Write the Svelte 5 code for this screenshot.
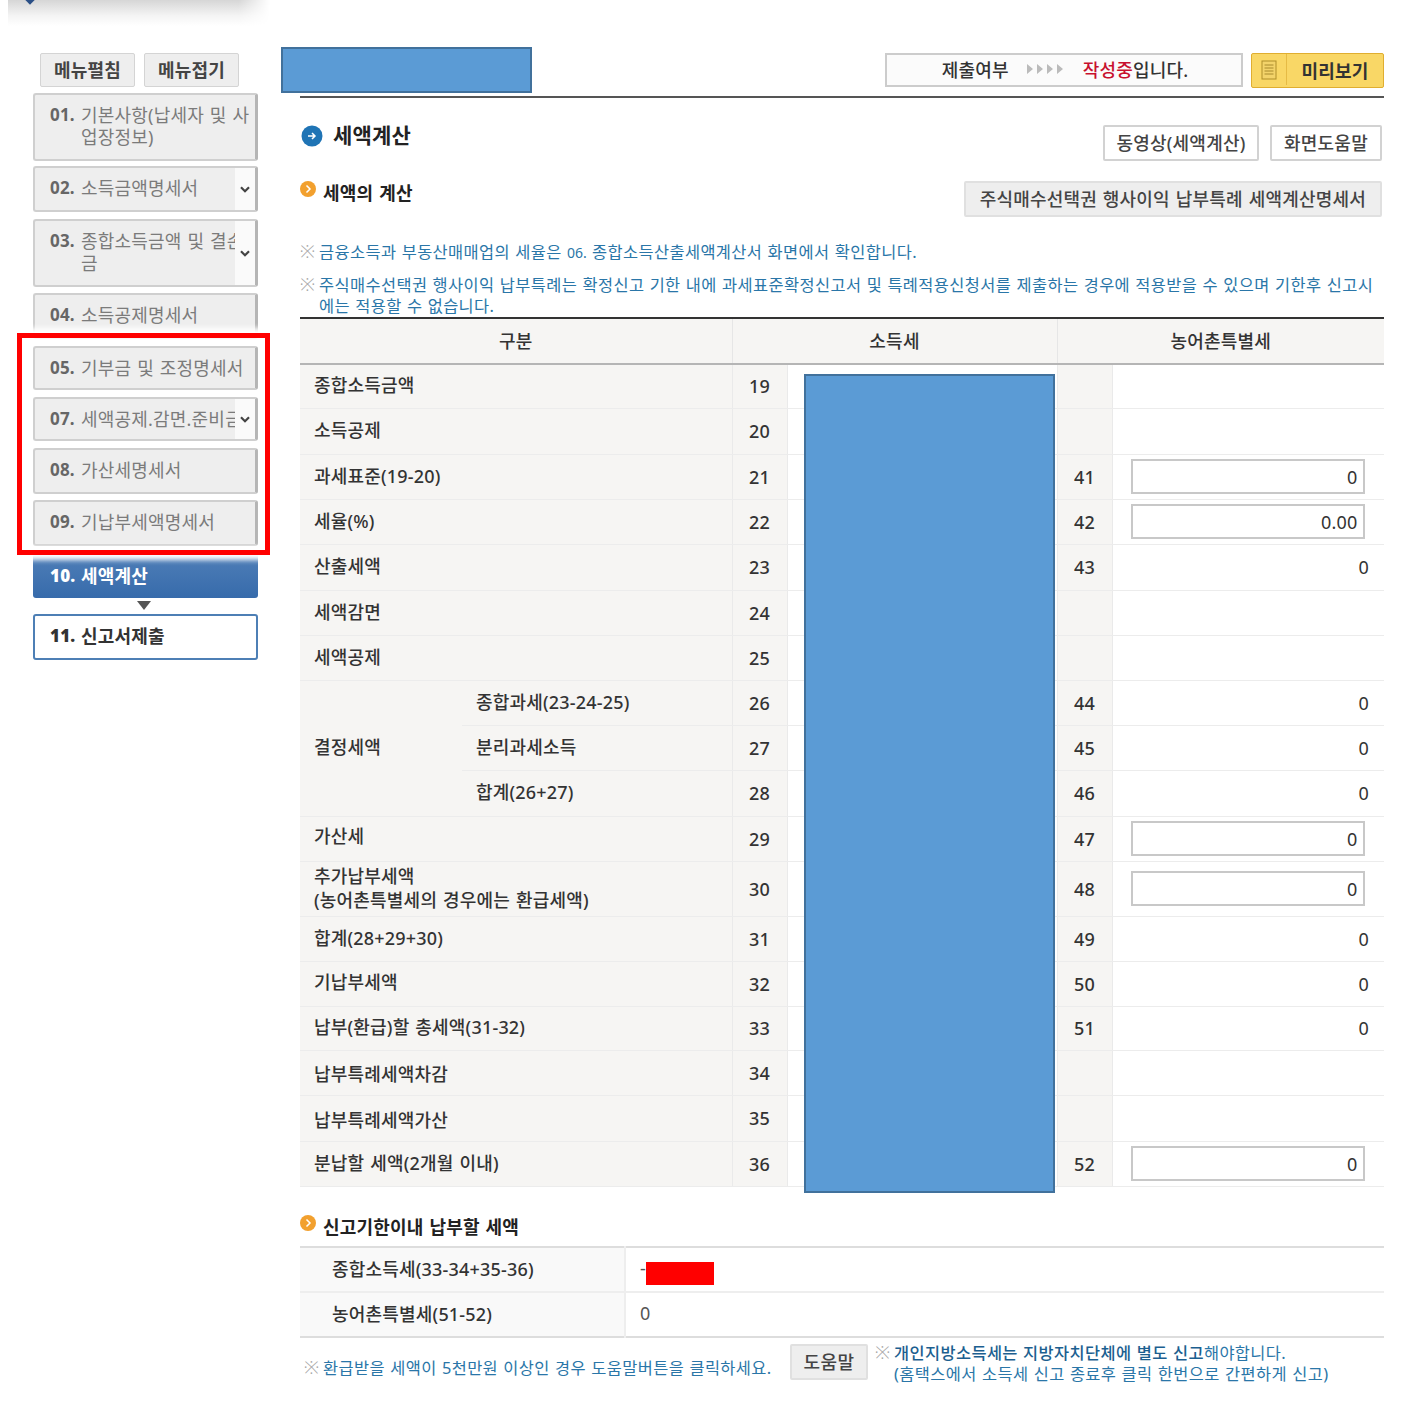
<script>
  const menu = [
    { num: "01.", label: "기본사항(납세자 및 사업장정보)", h: 68, mb: 5 },
    { num: "02.", label: "소득금액명세서", h: 46, mb: 7, arrow: true },
    { num: "03.", label: "종합소득금액 및 결손금", h: 68, mb: 6, arrow: true },
    { num: "04.", label: "소득공제명세서", h: 46, mb: 7 },
    { num: "05.", label: "기부금 및 조정명세서", h: 44, mb: 7 },
    { num: "07.", label: "세액공제.감면.준비금명세서", h: 44, mb: 7, arrow: true, nowrap: true },
    { num: "08.", label: "가산세명세서", h: 46, mb: 6 },
    { num: "09.", label: "기납부세액명세서", h: 46, mb: 6 },
  ];

  // pt / pb: the source's labels sit a little off-centre in a few rows
  const rows = [
    { label: "종합소득금액", no: 19, h: 44 },
    { label: "소득공제", no: 20, h: 46 },
    { label: "과세표준(19-20)", no: 21, no2: 41, input: "0", h: 45 },
    { label: "세율(%)", no: 22, no2: 42, input: "0.00", h: 45 },
    { label: "산출세액", no: 23, no2: 43, val: "0", h: 46 },
    { label: "세액감면", no: 24, h: 45 },
    { label: "세액공제", no: 25, h: 45 },
    { group: "결정세액", span: 3, label: "종합과세(23-24-25)", no: 26, no2: 44, val: "0", h: 45 },
    { sub: true, label: "분리과세소득", no: 27, no2: 45, val: "0", h: 45 },
    { sub: true, label: "합계(26+27)", no: 28, no2: 46, val: "0", h: 46 },
    { label: "가산세", no: 29, no2: 47, input: "0", h: 45, pb: 6 },
    { label: "추가납부세액\n(농어촌특별세의 경우에는 환급세액)", no: 30, no2: 48, input: "0", h: 55 },
    { label: "합계(28+29+30)", no: 31, no2: 49, val: "0", h: 45 },
    { label: "기납부세액", no: 32, no2: 50, val: "0", h: 45, pb: 4 },
    { label: "납부(환급)할 총세액(31-32)", no: 33, no2: 51, val: "0", h: 44 },
    { label: "납부특례세액차감", no: 34, h: 45, pt: 5 },
    { label: "납부특례세액가산", no: 35, h: 46, pt: 5 },
    { label: "분납할 세액(2개월 이내)", no: 36, no2: 52, input: "0", h: 45 },
  ];
</script>

<div class="page">
  <div class="topstrip"><span class="diamond"></span></div>

  <div class="columns">
    <aside class="side">
      <div class="side-btns">
        <button class="side-btn">메뉴펼침</button>
        <button class="side-btn">메뉴접기</button>
      </div>

      <ul class="menu">
        {#each menu as m}
          <li class="item" style="height:{m.h}px;margin-bottom:{m.mb}px">
            <b>{m.num}</b>
            <span class:nowrap={m.nowrap}>{m.label}</span>
            {#if m.arrow}
              <i class="drop">
                <svg width="10" height="7" viewBox="0 0 10 7"><path d="M1 1.2l4 4 4-4" fill="none" stroke="#444" stroke-width="2.2" /></svg>
              </i>
            {/if}
          </li>
        {/each}
        <li class="item current"><b>10.</b><span>세액계산</span></li>
        <li class="down"></li>
        <li class="item next"><b>11.</b><span>신고서제출</span></li>
      </ul>

      <div class="mark"></div>
    </aside>

    <main class="main">
      <div class="mask-title"></div>

      <div class="status-row">
        <div class="status">
          <span>제출여부</span>
          <svg width="38" height="10" viewBox="0 0 38 10" fill="#bbb">
            <path d="M0 0l6 5-6 5zM10 0l6 5-6 5zM20 0l6 5-6 5zM30 0l6 5-6 5z" />
          </svg>
          <span><em>작성중</em>입니다.</span>
        </div>
        <button class="preview">
          <i class="preview-icon">
            <svg width="16" height="20" viewBox="0 0 16 20">
              <rect x="1" y="1" width="14" height="18" fill="#f3d36a" stroke="#b08f2a" />
              <path d="M3.5 5h9M3.5 8h9M3.5 11h9M3.5 14h9" stroke="#a88a2c" />
            </svg>
          </i>
          <span>미리보기</span>
        </button>
      </div>

      <div class="title-row">
        <h1>
          <svg width="22" height="22" viewBox="0 0 22 22">
            <circle cx="11" cy="11" r="10.5" fill="#1f74b5" />
            <path d="M7 11h6M11 8l3 3-3 3" fill="none" stroke="#fff" stroke-width="1.5" />
          </svg>
          <span>세액계산</span>
        </h1>
        <div class="title-btns">
          <button class="btn video">동영상(세액계산)</button>
          <button class="btn screen">화면도움말</button>
        </div>
      </div>

      <div class="sub-row">
        <h2>
          <svg class="bullet" width="16" height="16" viewBox="0 0 16 16">
            <circle cx="8" cy="8" r="8" fill="#f2a02e" />
            <path d="M6.5 4.5l3.5 3.5-3.5 3.5" fill="none" stroke="#fff" stroke-width="1.5" />
          </svg>
          세액의 계산
        </h2>
        <button class="btn grey">주식매수선택권 행사이익 납부특례 세액계산명세서</button>
      </div>

      <div class="notes">
        <p><i>※</i><span>금융소득과 부동산매매업의 세율은 <small>06.</small> 종합소득산출세액계산서 화면에서 확인합니다.</span></p>
        <p class="second"><i>※</i><span>주식매수선택권 행사이익 납부특례는 확정신고 기한 내에 과세표준확정신고서 및 특례적용신청서를 제출하는 경우에 적용받을 수 있으며 기한후 신고시에는 적용할 수 없습니다.</span></p>
      </div>

      <div class="table-wrap">
        <table class="calc">
          <colgroup>
            <col style="width:162px" /><col style="width:270px" /><col style="width:55px" />
            <col style="width:270px" /><col style="width:55px" /><col style="width:272px" />
          </colgroup>
          <thead>
            <tr>
              <th colspan="2">구분</th>
              <th colspan="2">소득세</th>
              <th colspan="2">농어촌특별세</th>
            </tr>
          </thead>
          <tbody>
            {#each rows as r}
              <tr style="height:{r.h}px">
                {#if r.group}
                  <td class="lab" rowspan={r.span}>{r.group}</td>
                  <td class="lab inner">{r.label}</td>
                {:else if r.sub}
                  <td class="lab inner">{r.label}</td>
                {:else}
                  <td class="lab" colspan="2" style="padding-top:{r.pt ?? 0}px;padding-bottom:{r.pb ?? 2}px">{r.label}</td>
                {/if}
                <td class="no">{r.no}</td>
                <td></td>
                <td class="no">{r.no2 ?? ""}</td>
                <td class="val">
                  {#if r.input}
                    <input value={r.input} readonly />
                  {:else if r.val}
                    {r.val}
                  {/if}
                </td>
              </tr>
            {/each}
          </tbody>
        </table>
        <div class="mask-tax"></div>
      </div>

      <h2 class="deadline">
        <svg class="bullet" width="16" height="16" viewBox="0 0 16 16">
          <circle cx="8" cy="8" r="8" fill="#f2a02e" />
          <path d="M6.5 4.5l3.5 3.5-3.5 3.5" fill="none" stroke="#fff" stroke-width="1.5" />
        </svg>
        신고기한이내 납부할 세액
      </h2>

      <table class="pay">
        <tbody>
          <tr>
            <td class="pay-lab">종합소득세(33-34+35-36)</td>
            <td class="pay-val">-<span class="mask-red"></span></td>
          </tr>
          <tr>
            <td class="pay-lab">농어촌특별세(51-52)</td>
            <td class="pay-val">0</td>
          </tr>
        </tbody>
      </table>

      <div class="foot">
        <p class="foot-left"><i>※</i><span>환급받을 세액이 5천만원 이상인 경우 도움말버튼을 클릭하세요.</span></p>
        <button class="btn grey help">도움말</button>
        <p class="foot-right"><i>※</i><span><strong>개인지방소득세는 지방자치단체에 별도 신고</strong>해야합니다.<br />(홈택스에서 소득세 신고 종료후 클릭 한번으로 간편하게 신고)</span></p>
      </div>
    </main>
  </div>
</div>

<style>
  :global(body) {
    margin: 0;
    background: #fff;
  }
  .page {
    width: 1412px;
    height: 1421px;
    overflow: hidden;
    font-family: "Noto Sans", "Noto Sans CJK KR", sans-serif;
    font-size: 18px;
    color: #333;
    letter-spacing: 0.2px;
    word-spacing: 1px;
  }
  button {
    font-family: inherit;
    letter-spacing: inherit;
    word-spacing: inherit;
    cursor: pointer;
  }

  .topstrip {
    position: relative;
    width: 262px;
    height: 26px;
    margin-left: 8px;
    background: linear-gradient(to bottom, #d6d6d6, #f4f4f4 60%, #fff);
    -webkit-mask-image: linear-gradient(to right, #000 88%, transparent);
    mask-image: linear-gradient(to right, #000 88%, transparent);
  }
  .diamond {
    position: absolute;
    left: 18px;
    top: -5px;
    width: 8px;
    height: 8px;
    background: #2a4f86;
    transform: rotate(45deg);
  }

  .columns {
    display: flex;
    padding: 27px 0 0 33px;
  }

  /* left menu */
  .side {
    position: relative;
    width: 225px;
    flex: none;
  }
  .side-btns {
    display: flex;
    gap: 9px;
    margin: 0 0 6px 7px;
  }
  .side-btn {
    width: 95px;
    height: 34px;
    padding: 0 0 2px;
    border: 1px solid #d4d4d4;
    border-radius: 2px;
    background: #eee;
    font-size: 18px;
    font-weight: 700;
    color: #444;
  }
  .menu {
    list-style: none;
    margin: 0;
    padding: 0;
  }
  .item {
    position: relative;
    display: flex;
    box-sizing: border-box;
    padding: 9px 3px 0 15px;
    overflow: hidden;
    border: 2px solid #cfcfcf;
    border-right: 3px solid #b5b5b5;
    border-radius: 3px;
    background: #eee;
    color: #7b7b7b;
    line-height: 22px;
  }
  .item b {
    flex: none;
    width: 31px;
    font-size: 17px;
    color: #666;
  }
  .item span {
    flex: 1;
    min-width: 0;
    word-break: break-all;
  }
  .item span.nowrap {
    white-space: nowrap;
  }
  .drop {
    position: absolute;
    top: 0;
    right: 0;
    bottom: 0;
    display: flex;
    align-items: center;
    justify-content: center;
    width: 20px;
    background: #fafafa;
  }
  .current {
    height: 46px;
    padding: 13px 3px 0 17px;
    border: none;
    background: linear-gradient(#4f7fb8, #376bab);
    color: #fff;
    font-weight: 700;
  }
  .current b {
    color: #fff;
  }
  .down {
    width: 0;
    margin: 3px auto 4px;
    border: 7px solid transparent;
    border-top: 9px solid #555;
    border-bottom: 0;
    transform: translateX(-2px);
  }
  .next {
    height: 46px;
    border: 2px solid #4d7fb5;
    background: #fff;
    color: #333;
    font-weight: 700;
  }
  .next b {
    color: #333;
  }
  .mark {
    position: absolute;
    left: -16px;
    top: 280px;
    box-sizing: border-box;
    width: 253px;
    height: 222px;
    border: 5px solid #f00;
    box-shadow: 0 0 5px 5px #fff, inset 0 0 5px 3px #fff;
  }

  /* main column */
  .main {
    position: relative;
    width: 1084px;
    margin-left: 42px;
  }
  .mask-title {
    position: absolute;
    left: -19px;
    top: -6px;
    box-sizing: border-box;
    width: 251px;
    height: 46px;
    border: 2px solid #41719c;
    background: #5b9bd5;
  }
  .status-row {
    display: flex;
    justify-content: flex-end;
    gap: 8px;
    height: 43px;
    border-bottom: 2px solid #555;
  }
  .status {
    display: flex;
    align-items: center;
    justify-content: center;
    gap: 18px;
    box-sizing: border-box;
    width: 358px;
    height: 34px;
    padding: 0 0 3px 2px;
    border: 2px solid #ccc;
    background: #fbfbfb;
    font-weight: 500;
  }
  .status em {
    font-style: normal;
    color: #c8102e;
  }
  .preview {
    display: flex;
    align-items: center;
    box-sizing: border-box;
    width: 133px;
    height: 35px;
    padding: 0 0 2px;
    border: 1px solid #e0ae30;
    border-radius: 2px;
    background: #f9d766;
    font-size: 18px;
    font-weight: 700;
    color: #333;
  }
  .preview-icon {
    display: flex;
    align-items: center;
    justify-content: center;
    width: 34px;
    height: 100%;
    border-right: 1px solid #e6bb45;
  }
  .preview span {
    flex: 1;
  }
  .title-row {
    display: flex;
    justify-content: space-between;
    margin-top: 27px;
    padding-right: 2px;
  }
  h1,
  h2 {
    display: flex;
    margin: 0;
    color: #222;
  }
  h1 {
    align-items: center;
    gap: 10px;
    height: 22px;
    margin-left: 1px;
    font-size: 21px;
    font-weight: 700;
  }
  h1 span {
    margin-top: -4px;
  }
  .title-btns {
    display: flex;
    gap: 11px;
  }
  .btn {
    height: 36px;
    padding: 0 14px 2px;
    border: 2px solid #d2d2d2;
    border-radius: 2px;
    background: #fff;
    font-size: 18px;
    font-weight: 500;
    color: #444;
  }
  .video {
    width: 156px;
    padding: 0 0 2px;
  }
  .screen {
    width: 112px;
    padding: 0 0 2px;
  }
  .grey {
    background: #eee;
    border-color: #e0e0e0;
  }
  .sub-row {
    display: flex;
    justify-content: space-between;
    margin-top: 20px;
    padding-right: 2px;
  }
  h2 {
    gap: 7px;
    font-size: 18px;
    font-weight: 700;
    line-height: 24px;
  }
  .bullet {
    flex: none;
  }
  .notes {
    margin-top: 24px;
    padding-right: 8px;
    color: #2a76a8;
    font-size: 16.4px;
    letter-spacing: 0.4px;
    word-spacing: 0.6px;
    line-height: 21px;
  }
  .notes p {
    display: flex;
    margin: 0;
  }
  .notes .second {
    margin-top: 12px;
  }
  .notes small {
    font-size: 14px;
    line-height: 0;
    letter-spacing: 0;
  }
  i {
    font-style: normal;
  }
  .notes i,
  .foot i {
    flex: none;
    width: 19px;
    font-size: 18px;
    font-weight: 300;
    color: #a5a5a5;
  }

  .table-wrap {
    position: relative;
    margin-top: 1px;
  }
  table {
    width: 100%;
    table-layout: fixed;
    border-collapse: collapse;
  }
  .calc {
    border-top: 2px solid #333;
  }
  .calc th {
    height: 42px;
    padding: 0 0 2px;
    border-bottom: 2px solid #b5b5b5;
    border-left: 1px solid #e6e6e6;
    background: #f6f5f3;
    font-size: 18px;
    font-weight: 500;
    color: #333;
  }
  .calc th:first-child {
    border-left: 0;
  }
  .calc td {
    padding: 0;
    border-bottom: 1px solid #ececec;
  }
  .calc td.lab {
    padding-left: 14px;
    padding-bottom: 2px;
    background: #f6f5f3;
    font-weight: 500;
    white-space: pre-line;
    line-height: 24px;
  }
  .no {
    border-left: 1px solid #eaeaea;
    border-right: 1px solid #eaeaea;
    background: #f6f5f3;
    text-align: center;
    font-weight: 500;
  }
  .calc td.val {
    padding-right: 15px;
    text-align: right;
  }
  .val input {
    display: block;
    box-sizing: border-box;
    width: 234px;
    height: 35px;
    margin-left: 18px;
    padding: 0 5px;
    border: 2px solid #c8c8c8;
    background: #fff;
    font: inherit;
    letter-spacing: inherit;
    color: #333;
    text-align: right;
  }
  .mask-tax {
    position: absolute;
    left: 504px;
    top: 57px;
    box-sizing: border-box;
    width: 251px;
    height: 819px;
    border: 2px solid #41719c;
    background: #5b9bd5;
  }

  .deadline {
    margin-top: 28px;
  }
  .pay {
    margin-top: 7px;
    border-top: 2px solid #ddd;
    border-bottom: 2px solid #ddd;
  }
  .pay td {
    height: 41px;
    padding: 0 0 2px;
  }
  .pay tr + tr td {
    border-top: 2px solid #eee;
  }
  .pay td.pay-lab {
    width: 292px;
    padding-left: 32px;
    background: #f9f9f9;
    border-right: 2px solid #eee;
    font-weight: 500;
  }
  .pay td.pay-val {
    padding-left: 14px;
    color: #555;
  }
  .mask-red {
    display: inline-block;
    width: 68px;
    height: 23px;
    margin-bottom: -10px;
    background: #f00;
  }

  .foot {
    display: flex;
    align-items: flex-start;
    margin-top: 6px;
    color: #2a76a8;
    font-size: 16.4px;
    letter-spacing: 0.4px;
    word-spacing: 0.6px;
    line-height: 21px;
  }
  .foot p {
    display: flex;
    margin: 0;
  }
  .foot-left {
    width: 486px;
    margin: 13px 0 0 4px !important;
    white-space: nowrap;
  }
  .help {
    flex: none;
    width: 78px;
    padding: 0 0 2px;
    font-size: 18px;
  }
  .foot-right {
    margin: -2px 0 0 7px !important;
    white-space: nowrap;
  }
  .foot-right strong {
    font-weight: 500;
    color: #1c5f90;
  }
</style>
